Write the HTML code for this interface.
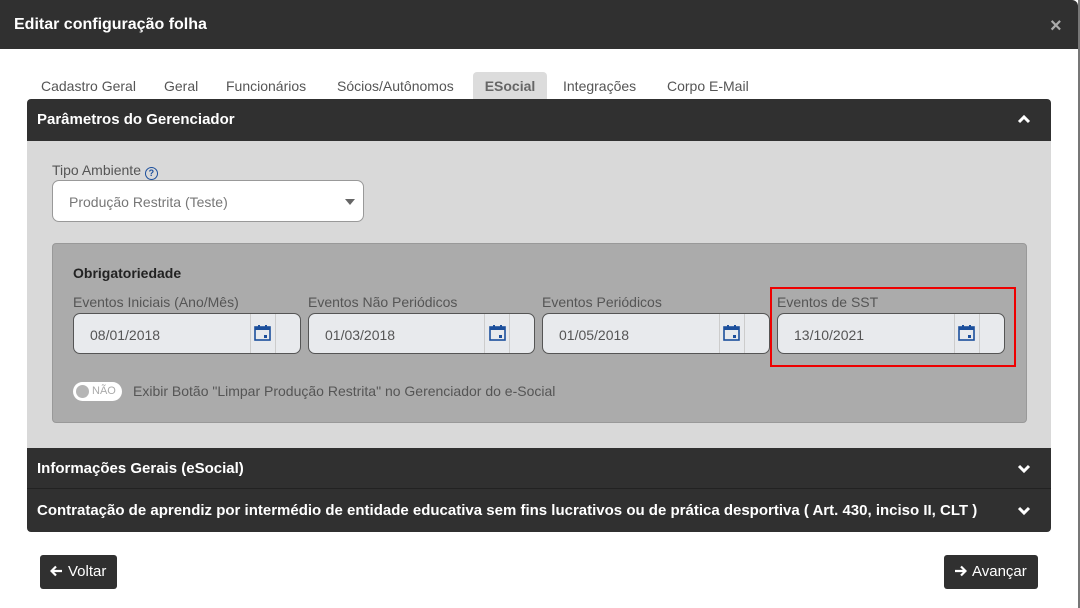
<!DOCTYPE html><html><head><meta charset="utf-8"><style>
*{box-sizing:border-box;margin:0;padding:0}
body{width:1080px;height:608px;background:#fff;font-family:"Liberation Sans",Arial,sans-serif;position:relative;overflow:hidden}
.abs{position:absolute}
.hdr{left:0;top:0;width:1078px;height:49px;background:#303030;color:#fff;font-weight:bold;font-size:16px;padding:16px 0 0 14px;border-top-right-radius:6px}
.edge{left:1078px;top:0;width:2px;height:608px;background:#777}
.tab{top:72px;height:27px;font-size:14px;color:#555;padding-top:6px}
.acc{left:27px;width:1024px;background:#303030;color:#fff;font-weight:bold;font-size:15px;padding-left:10px}
.lbl{font-size:14px;color:#555}
.inp{height:41px;border:1px solid #555;border-radius:7px;background:#e8eaed;font-size:14px;color:#555;padding:13px 0 0 16px}
.cal{position:absolute;right:24px;top:0;width:26px;height:39px;border-left:1px solid #ccc;border-right:1px solid #ccc}
.btn{top:555px;height:34px;background:#303030;color:#fff;font-size:15px;border-radius:3px;padding-top:8px;line-height:18px}
.chev{position:absolute;right:20px}
</style></head><body>
<div class="abs hdr">Editar configuração folha</div>
<div class="abs" style="left:1050px;top:15px;color:#aaa;font-size:20px;font-weight:bold">×</div>
<div class="abs edge"></div>
<div class="abs tab" style="left:41px">Cadastro Geral</div>
<div class="abs tab" style="left:164px">Geral</div>
<div class="abs tab" style="left:226px">Funcionários</div>
<div class="abs tab" style="left:337px">Sócios/Autônomos</div>
<div class="abs tab" style="left:473px;width:74px;background:#dcdcdc;border-radius:4px 4px 0 0;font-weight:bold;color:#666;text-align:center">ESocial</div>
<div class="abs tab" style="left:563px">Integrações</div>
<div class="abs tab" style="left:667px">Corpo E-Mail</div>
<div class="abs acc" style="top:99px;height:42px;padding-top:12px;border-radius:4px 4px 0 0">Parâmetros do Gerenciador
<svg class="chev" style="top:15px" width="14" height="10" viewBox="0 0 14 10"><path d="M2 8 L7 3 L12 8" stroke="#fff" stroke-width="3" fill="none"/></svg></div>
<div class="abs" style="left:27px;top:141px;width:1024px;height:307px;background:#d9d9d9"></div>
<div class="abs lbl" style="left:52px;top:162px">Tipo Ambiente <span style="display:inline-block;width:13px;height:13px;border:1.5px solid #1c4f9c;border-radius:50%;color:#1c4f9c;font-size:9px;text-align:center;line-height:10px;font-weight:bold;vertical-align:-1px">?</span></div>
<div class="abs" style="left:52px;top:180px;width:312px;height:42px;background:#fff;border:1px solid #999;border-radius:7px;font-size:14px;color:#777;padding:13px 0 0 16px">Produção Restrita (Teste)
<div style="position:absolute;right:8px;top:18px;border:5px solid transparent;border-top:6px solid #666"></div></div>
<div class="abs" style="left:52px;top:243px;width:975px;height:180px;background:#ababab;border:1px solid #999;border-radius:4px"></div>
<div class="abs" style="left:73px;top:265px;font-size:14px;font-weight:bold;color:#222">Obrigatoriedade</div>
<div class="abs lbl" style="left:73px;top:294px">Eventos Iniciais (Ano/Mês)</div>
<div class="abs lbl" style="left:308px;top:294px">Eventos Não Periódicos</div>
<div class="abs lbl" style="left:542px;top:294px">Eventos Periódicos</div>
<div class="abs lbl" style="left:777px;top:294px">Eventos de SST</div>
<div class="abs inp" style="left:73px;top:313px;width:228px">08/01/2018<div class="cal"></div></div>
<div class="abs inp" style="left:308px;top:313px;width:227px">01/03/2018<div class="cal"></div></div>
<div class="abs inp" style="left:542px;top:313px;width:228px">01/05/2018<div class="cal"></div></div>
<div class="abs inp" style="left:777px;top:313px;width:228px">13/10/2021<div class="cal"></div></div>
<svg class="abs" style="left:0;top:0" width="1080" height="608">
<g fill="#1c4f9c">
<g transform="translate(255,326)"><rect x="0" y="1" width="15" height="13" fill="none" stroke="#1c4f9c" stroke-width="1.6"/><rect x="0" y="1" width="15" height="3"/><rect x="3" y="-1" width="2" height="3"/><rect x="10" y="-1" width="2" height="3"/><rect x="9" y="9" width="3" height="3"/></g>
<g transform="translate(490,326)"><rect x="0" y="1" width="15" height="13" fill="none" stroke="#1c4f9c" stroke-width="1.6"/><rect x="0" y="1" width="15" height="3"/><rect x="3" y="-1" width="2" height="3"/><rect x="10" y="-1" width="2" height="3"/><rect x="9" y="9" width="3" height="3"/></g>
<g transform="translate(724,326)"><rect x="0" y="1" width="15" height="13" fill="none" stroke="#1c4f9c" stroke-width="1.6"/><rect x="0" y="1" width="15" height="3"/><rect x="3" y="-1" width="2" height="3"/><rect x="10" y="-1" width="2" height="3"/><rect x="9" y="9" width="3" height="3"/></g>
<g transform="translate(959,326)"><rect x="0" y="1" width="15" height="13" fill="none" stroke="#1c4f9c" stroke-width="1.6"/><rect x="0" y="1" width="15" height="3"/><rect x="3" y="-1" width="2" height="3"/><rect x="10" y="-1" width="2" height="3"/><rect x="9" y="9" width="3" height="3"/></g>
</g>
<rect x="771" y="288" width="244" height="78" fill="none" stroke="#e00" stroke-width="2"/>
</svg>
<div class="abs" style="left:73px;top:382px;width:49px;height:19px;background:#fff;border-radius:10px;font-size:11px;color:#aaa;padding:3px 0 0 19px">NÃO<div style="position:absolute;left:3px;top:3px;width:13px;height:13px;border-radius:50%;background:#b5b5b5"></div></div>
<div class="abs lbl" style="left:133px;top:383px;color:#555">Exibir Botão "Limpar Produção Restrita" no Gerenciador do e-Social</div>
<div class="abs acc" style="top:448px;height:41px;padding-top:12px;border-bottom:1px solid #222">Informações Gerais (eSocial)
<svg class="chev" style="top:16px" width="14" height="10" viewBox="0 0 14 10"><path d="M2 2 L7 7 L12 2" stroke="#fff" stroke-width="3" fill="none"/></svg></div>
<div class="abs acc" style="top:489px;height:43px;padding-top:13px;border-radius:0 0 4px 4px">Contratação de aprendiz por intermédio de entidade educativa sem fins lucrativos ou de prática desportiva ( Art. 430, inciso II, CLT )
<svg class="chev" style="top:17px" width="14" height="10" viewBox="0 0 14 10"><path d="M2 2 L7 7 L12 2" stroke="#fff" stroke-width="3" fill="none"/></svg></div>
<div class="abs btn" style="left:40px;width:77px;padding-left:10px"><svg width="13" height="12" viewBox="0 0 13 12" style="vertical-align:-1px;margin-right:5px"><path d="M12 6 H2 M6 1.5 L1.5 6 L6 10.5" stroke="#fff" stroke-width="2.2" fill="none"/></svg>Voltar</div>
<div class="abs btn" style="left:944px;width:94px;padding-left:10px"><svg width="13" height="12" viewBox="0 0 13 12" style="vertical-align:-1px;margin-right:5px"><path d="M1 6 H11 M7 1.5 L11.5 6 L7 10.5" stroke="#fff" stroke-width="2.2" fill="none"/></svg>Avançar</div>
</body></html>
